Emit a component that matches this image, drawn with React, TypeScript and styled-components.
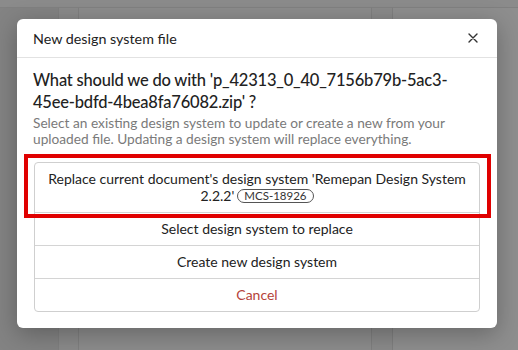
import styled, { createGlobalStyle } from 'styled-components';

const GlobalStyle = createGlobalStyle`
  html, body {
    margin: 0;
    padding: 0;
  }
  body {
    font-family: Lato, "Noto Sans", sans-serif;
    color: #222;
  }
`;

const Screen = styled.div`
  position: relative;
  width: 518px;
  height: 350px;
  overflow: hidden;
  background: #8b8b8b;
`;

// faint page behind the backdrop
const BehindPage = styled.div`
  display: grid;
  grid-template-columns: 59px 20px 293px 21px 1fr;
  height: 100%;
`;

const BehindColumn = styled.div<{ $tone: string; $edge?: boolean }>`
  background: ${(p) => p.$tone};
  border-right: ${(p) => (p.$edge ? '1px solid #7f7f7f' : 'none')};
  border-top: 1px solid #808080;
  margin-top: 7px;
`;

const Backdrop = styled.div`
  position: absolute;
  inset: 0;
  display: flex;
  padding: 19px 0 0 17px;
`;

const Dialog = styled.div`
  width: 480px;
  height: 309px;
  background: #fff;
  border-radius: 6px;
  box-shadow: 0 6px 24px rgba(0, 0, 0, 0.28);
  display: flex;
  flex-direction: column;
`;

const Header = styled.div`
  height: 40px;
  display: flex;
  align-items: center;
  justify-content: space-between;
  padding: 0 16px;
  border-bottom: 1px solid #e2e2e2;
`;

const Title = styled.div`
  font-size: 14.3px;
  color: #222;
`;

const CloseButton = styled.button`
  border: none;
  background: none;
  padding: 0;
  width: 16px;
  height: 16px;
  display: flex;
  align-items: center;
  justify-content: center;
  color: #333;
  cursor: pointer;
`;

const Body = styled.div`
  padding: 11px 16px 16px;
  position: relative;
`;

const Question = styled.h2`
  margin: 0;
  font-size: 16.5px;
  letter-spacing: -0.2px;
  line-height: 22px;
  font-weight: 500;
  color: #222;
`;

const Description = styled.p`
  margin: 2px 0 15px;
  font-size: 13.7px;
  line-height: 16px;
  color: #7a7a7a;
`;

const OptionList = styled.div`
  border: 1px solid #cfcfcf;
  border-radius: 4px;
  display: flex;
  flex-direction: column;
  margin: 0 1px;
`;

const Option = styled.button<{ $danger?: boolean }>`
  border: none;
  border-top: 1px solid #d4d4d4;
  background: none;
  padding: 8px 12px;
  font-family: inherit;
  font-size: 14px;
  line-height: 16px;
  color: ${(p) => (p.$danger ? '#b5433a' : '#222')};
  text-align: center;
  cursor: pointer;

  &:first-child {
    border-top: none;
    line-height: 16.5px;
  }
`;

const OptionLine = styled.span`
  display: flex;
  justify-content: center;
  align-items: center;
  gap: 3px;
`;

const Tag = styled.span`
  display: inline-block;
  border: 1px solid #555;
  border-radius: 8px;
  padding: 0 6px;
  font-size: 11.5px;
  line-height: 12px;
  color: #333;
`;

const Highlight = styled.div`
  position: absolute;
  left: 7px;
  top: 96px;
  width: 459px;
  height: 56px;
  border: 4px solid #e00000;
  pointer-events: none;
`;

function CloseIcon() {
  return (
    <svg width="10" height="10" viewBox="0 0 10 10">
      <path d="M1 1L9 9M9 1L1 9" stroke="currentColor" strokeWidth="1.4" strokeLinecap="round" />
    </svg>
  );
}

export default function App() {
  return (
    <Screen>
      <GlobalStyle />
      <BehindPage>
        <BehindColumn $tone="#838383" $edge />
        <BehindColumn $tone="#8a8a8a" $edge />
        <BehindColumn $tone="#8c8c8c" $edge />
        <BehindColumn $tone="#8a8a8a" $edge />
        <BehindColumn $tone="#8e8e8e" />
      </BehindPage>
      <Backdrop>
        <Dialog>
          <Header>
            <Title>New design system file</Title>
            <CloseButton aria-label="Close">
              <CloseIcon />
            </CloseButton>
          </Header>
          <Body>
            <Question>
              What should we do with 'p_42313_0_40_7156b79b-5ac3-45ee-bdfd-4bea8fa76082.zip' ?
            </Question>
            <Description>
              Select an existing design system to update or create a new from your uploaded file. Updating a
              design system will replace everything.
            </Description>
            <OptionList>
              <Option>
                <OptionLine>Replace current document's design system 'Remepan Design System</OptionLine>
                <OptionLine>
                  2.2.2'
                  <Tag>MCS-18926</Tag>
                </OptionLine>
              </Option>
              <Option>Select design system to replace</Option>
              <Option>Create new design system</Option>
              <Option $danger>Cancel</Option>
            </OptionList>
            <Highlight />
          </Body>
        </Dialog>
      </Backdrop>
    </Screen>
  );
}
